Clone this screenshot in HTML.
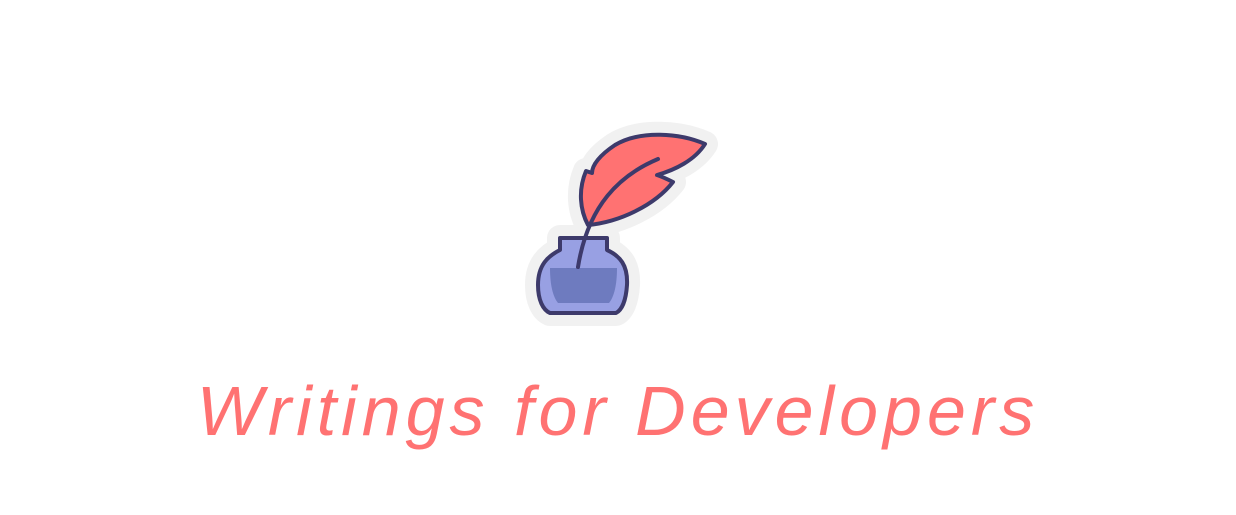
<!DOCTYPE html>
<html><head><meta charset="utf-8"><style>
html,body{margin:0;padding:0;background:#fff;width:1236px;height:515px;overflow:hidden}
svg{position:absolute;left:0;top:0}
.t{position:absolute;left:0;width:1236px;top:366px;text-align:center;font-family:"Liberation Sans",sans-serif;font-style:italic;font-size:70px;color:#ff7272;letter-spacing:5px;line-height:90px}
</style></head><body>
<svg width="1236" height="515" viewBox="0 0 1236 515">
<g stroke="#f1f1f1" stroke-width="26" stroke-linejoin="round" stroke-linecap="round" fill="#f1f1f1">
<path d="M705,144 C680,133 640,130 615,145 C600,155 592,165 592,173 L586,171 C578,190 580,210 588,225 C620,222 655,205 673,182 C665,178 660,176 657,175 C675,170 695,160 705,144 Z"/>
<path d="M560,238 L607,238 L607,250 C620,256 628,265 627,285 C626,300 622,310 616,313 L550,313 C543,310 538,300 538,285 C538,265 548,256 560,250 Z"/>
</g>
<path d="M705,144 C680,133 640,130 615,145 C600,155 592,165 592,173 L586,171 C578,190 580,210 588,225 C620,222 655,205 673,182 C665,178 660,176 657,175 C675,170 695,160 705,144 Z" fill="#ff7272" stroke="#3d3a6b" stroke-width="4" stroke-linejoin="round"/>
<path d="M560,238 L607,238 L607,250 C620,256 628,265 627,285 C626,300 622,310 616,313 L550,313 C543,310 538,300 538,285 C538,265 548,256 560,250 Z" fill="#98a0e3" stroke="#3d3a6b" stroke-width="4" stroke-linejoin="round"/>
<path d="M550,268 L617,268 C617,285 614,297 609,303 L558,303 C553,297 550,285 550,268 Z" fill="#6e7bbf"/>
<path d="M658,159 C620,175 588,205 578,267" fill="none" stroke="#3d3a6b" stroke-width="4" stroke-linecap="round"/>
</svg>
<div class="t">Writings for Developers</div>
</body></html>
